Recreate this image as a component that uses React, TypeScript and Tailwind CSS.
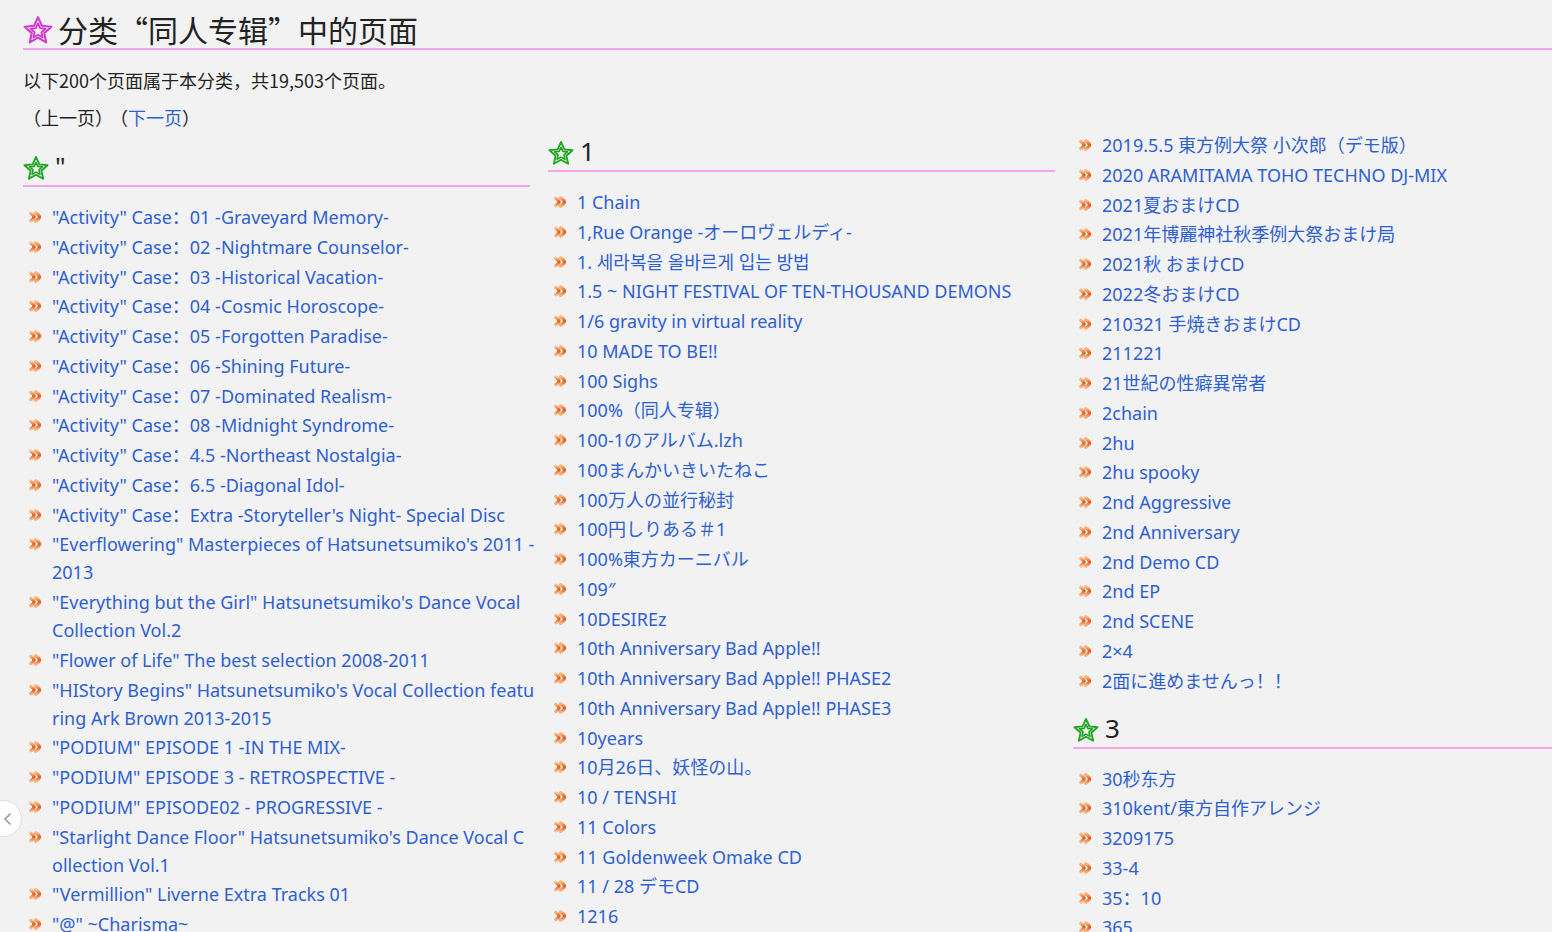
import React from "react";

const FONT = "font-['Noto_Sans','Noto_Sans_CJK_SC','Noto_Sans_CJK_JP',sans-serif]";
const CJK = "font-['Noto_Sans_CJK_SC',sans-serif]";

const col1: string[] = [
  '"Activity" Case：01 -Graveyard Memory-',
  '"Activity" Case：02 -Nightmare Counselor-',
  '"Activity" Case：03 -Historical Vacation-',
  '"Activity" Case：04 -Cosmic Horoscope-',
  '"Activity" Case：05 -Forgotten Paradise-',
  '"Activity" Case：06 -Shining Future-',
  '"Activity" Case：07 -Dominated Realism-',
  '"Activity" Case：08 -Midnight Syndrome-',
  '"Activity" Case：4.5 -Northeast Nostalgia-',
  '"Activity" Case：6.5 -Diagonal Idol-',
  '"Activity" Case：Extra -Storyteller\'s Night- Special Disc',
  '"Everflowering" Masterpieces of Hatsunetsumiko\'s 2011 -\n2013',
  '"Everything but the Girl" Hatsunetsumiko\'s Dance Vocal\nCollection Vol.2',
  '"Flower of Life" The best selection 2008-2011',
  '"HIStory Begins" Hatsunetsumiko\'s Vocal Collection featu\nring Ark Brown 2013-2015',
  '"PODIUM" EPISODE 1 -IN THE MIX-',
  '"PODIUM" EPISODE 3 - RETROSPECTIVE -',
  '"PODIUM" EPISODE02 - PROGRESSIVE -',
  '"Starlight Dance Floor" Hatsunetsumiko\'s Dance Vocal C\nollection Vol.1',
  '"Vermillion" Liverne Extra Tracks 01',
  '"@" ~Charisma~',
];

const col2: string[] = [
  "1 Chain",
  "1,Rue Orange -オーロヴェルディ-",
  "1. 세라복을 올바르게 입는 방법",
  "1.5 ~ NIGHT FESTIVAL OF TEN-THOUSAND DEMONS",
  "1/6 gravity in virtual reality",
  "10 MADE TO BE!!",
  "100 Sighs",
  "100%（同人专辑）",
  "100-1のアルバム.lzh",
  "100まんかいきいたねこ",
  "100万人の並行秘封",
  "100円しりある＃1",
  "100%東方カーニバル",
  "109″",
  "10DESIREz",
  "10th Anniversary Bad Apple!!",
  "10th Anniversary Bad Apple!! PHASE2",
  "10th Anniversary Bad Apple!! PHASE3",
  "10years",
  "10月26日、妖怪の山。",
  "10 / TENSHI",
  "11 Colors",
  "11 Goldenweek Omake CD",
  "11 / 28 デモCD",
  "1216",
];

const col3a: string[] = [
  "2019.5.5 東方例大祭 小次郎（デモ版）",
  "2020 ARAMITAMA TOHO TECHNO DJ-MIX",
  "2021夏おまけCD",
  "2021年博麗神社秋季例大祭おまけ局",
  "2021秋 おまけCD",
  "2022冬おまけCD",
  "210321 手焼きおまけCD",
  "211221",
  "21世紀の性癖異常者",
  "2chain",
  "2hu",
  "2hu spooky",
  "2nd Aggressive",
  "2nd Anniversary",
  "2nd Demo CD",
  "2nd EP",
  "2nd SCENE",
  "2×4",
  "2面に進めませんっ！！",
];

const col3b: string[] = [
  "30秒东方",
  "310kent/東方自作アレンジ",
  "3209175",
  "33-4",
  "35：10",
  "365",
];

function Star({ color, size }: { color: string; size: number }) {
  const pts = (r: number) => {
    const out: string[] = [];
    for (let i = 0; i < 10; i++) {
      const rad = i % 2 === 0 ? r : r * 0.47;
      const a = -Math.PI / 2 + (i * Math.PI) / 5;
      out.push(`${(12 + rad * Math.cos(a)).toFixed(2)},${(12.9 + rad * Math.sin(a)).toFixed(2)}`);
    }
    return out.join(" ");
  };
  return (
    <svg width={size} height={size} viewBox="0 0 24 24" fill="none" stroke={color} strokeLinejoin="round">
      <polygon points={pts(11.2)} strokeWidth={1.7} />
      <polygon points={pts(6.2)} strokeWidth={1.5} />
    </svg>
  );
}

function Bullet() {
  return (
    <svg width="15" height="12" viewBox="0 0 15 12" fill="none" strokeLinecap="round">
      <defs>
        <linearGradient id="bg" x1="0" y1="0" x2="0" y2="1">
          <stop offset="0" stopColor="#f9bb86" />
          <stop offset="0.5" stopColor="#e0581a" />
          <stop offset="1" stopColor="#f7b581" />
        </linearGradient>
      </defs>
      <path d="M1.9 2.3 Q8.2 6 1.9 9.7" stroke="url(#bg)" strokeWidth="3.3" />
      <path d="M6.6 1.8 Q14.4 6 6.6 10.2" stroke="url(#bg)" strokeWidth="3.3" />
    </svg>
  );
}

function Item({ text }: { text: string }) {
  return (
    <li className="flex mb-[1.75px]">
      <div className="h-[28px] w-[29px] shrink-0 flex items-center pl-[6px]">
        <Bullet />
      </div>
      <a className="text-[#2e5fd1] leading-[28px] whitespace-pre">{text}</a>
    </li>
  );
}

function Heading({ label }: { label: string }) {
  return (
    <div className="flex items-center gap-[6px] h-[41px] pt-[2px] pb-[1px] border-b-2 border-[#f6a3ec]">
      <div className="pt-[4px]">
        <Star color="#1fa51f" size={26} />
      </div>
      <span className="text-[26px] leading-[36px] text-[#222]">{label}</span>
    </div>
  );
}

export default function App() {
  return (
    <div className={`relative h-[932px] w-full overflow-hidden bg-[#f2f2f2] text-[18px] text-[#222] ${FONT}`}>
      <div className="w-[1600px] pl-[23px]">
        {/* Title */}
        <h1 className="flex items-center gap-[5px] pt-[12px] pb-[2px] border-b-2 border-[#f6a3ec] mr-[25px]">
          <div className="pt-[2px]">
            <Star color="#d43ad2" size={30} />
          </div>
          <span className={`text-[30px] leading-[34px] ${CJK}`}>分类“同人专辑”中的页面</span>
        </h1>

        <p className={`mt-[16px] leading-[28px] ${CJK}`}>以下200个页面属于本分类，共19,503个页面。</p>
        <p className={`mt-[9px] leading-[28px] ${CJK}`}>
          <span>（上一页）</span>
          <span className="ml-[6px]">
            （<a className="text-[#2e5fd1]">下一页</a>）
          </span>
        </p>

        <div className="grid grid-cols-[507px_507px_507px] gap-x-[18px]">
          <div className="pt-[15px]">
            <Heading label={'"'} />
            <ul className="mt-[16px]">
              {col1.map((t) => (
                <Item key={t} text={t} />
              ))}
            </ul>
          </div>
          <div>
            <Heading label="1" />
            <ul className="mt-[16px]">
              {col2.map((t) => (
                <Item key={t} text={t} />
              ))}
            </ul>
          </div>
          <div>
            <ul>
              {col3a.map((t) => (
                <Item key={t} text={t} />
              ))}
            </ul>
            <div className="mt-[13px]">
              <Heading label="3" />
            </div>
            <ul className="mt-[16px]">
              {col3b.map((t) => (
                <Item key={t} text={t} />
              ))}
            </ul>
          </div>
        </div>
      </div>

      {/* side scroll button */}
      <div className="absolute left-[-15px] top-[800px] w-[37px] h-[37px] rounded-full bg-white border border-[#dcdcdc] flex items-center justify-end pr-[8px]">
        <svg width="10" height="14" viewBox="0 0 10 14" fill="none" stroke="#9a9a9a" strokeWidth="1.6">
          <path d="M7.5 1.5 L2 7 L7.5 12.5" />
        </svg>
      </div>
    </div>
  );
}
